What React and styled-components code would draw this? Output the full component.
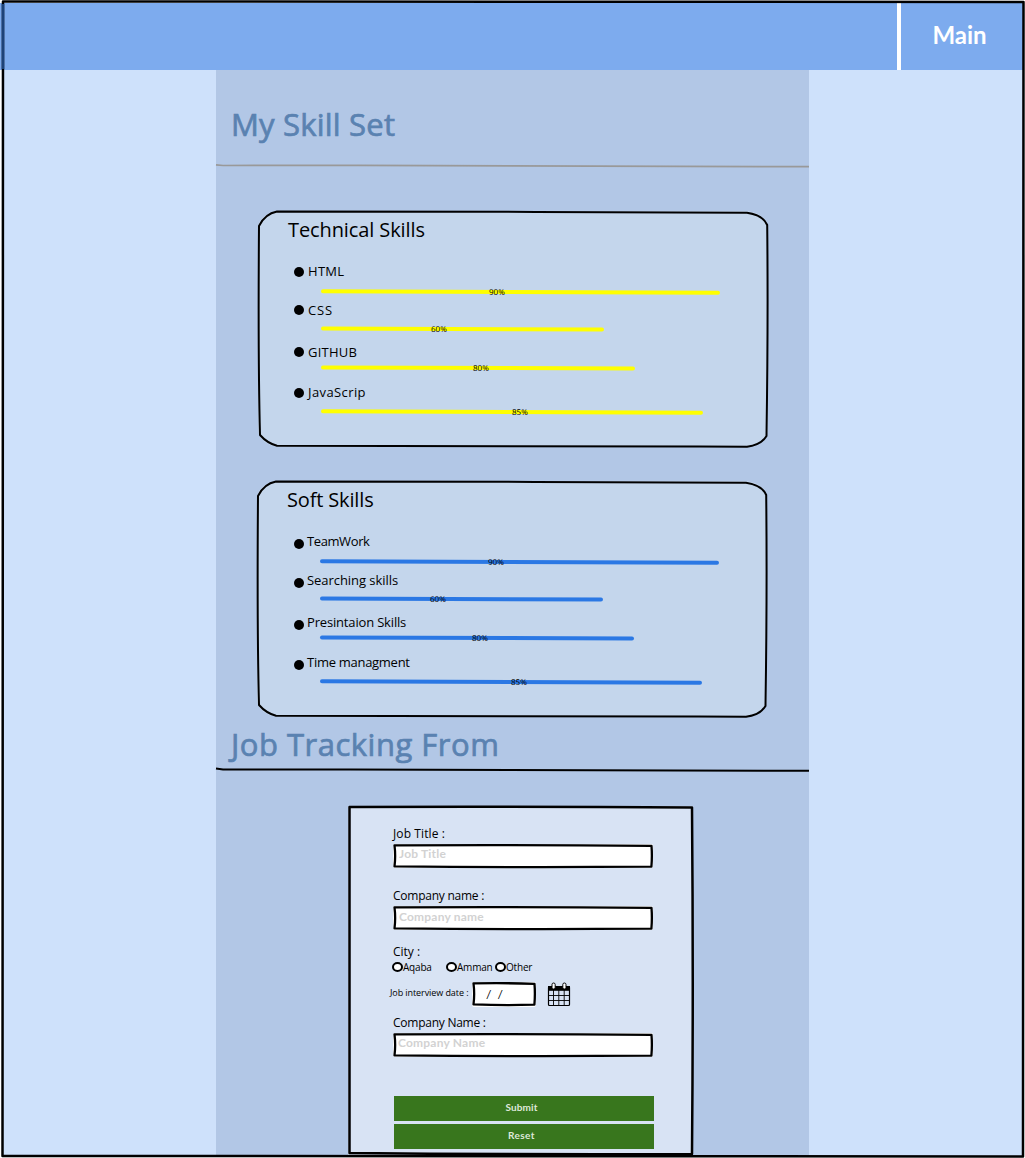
import React from 'react';
import styled, { createGlobalStyle } from 'styled-components';

const Global = createGlobalStyle`
  *, *::before, *::after { box-sizing: border-box; }
  body { margin: 0; background: #fff; }
  h1, h2, ul, p { margin: 0; padding: 0; font-weight: 400; }
  body { font-family: "Open Sans", "Noto Sans", sans-serif; }
  input, button { font-family: Lato, "Open Sans", sans-serif; }
`;

const Page = styled.div`
  position: relative;
  width: 1025px;
  height: 1158px;
  overflow: hidden;
  display: flex;
  flex-direction: column;
  padding: 3px 2px 1px 3px;
  background: #fff;
  color: #000;
`;

const Outline = styled.svg`
  position: absolute;
  left: 0;
  top: 0;
  overflow: visible;
  pointer-events: none;
  fill: none;
  stroke: #000;
  stroke-linejoin: round;
  stroke-linecap: round;
`;

const TopBar = styled.header`
  flex: none;
  height: 67px;
  margin: 0 -1px 0 -3px;
  display: flex;
  justify-content: flex-end;
  background: #7dabee;
`;

const NavLink = styled.a`
  width: 127px;
  border-left: 4px solid #fff;
  padding-right: 6px;
  text-align: center;
  color: #fff;
  font-family: Lato, sans-serif;
  font-size: 24px;
  font-weight: 700;
  letter-spacing: 0;
  line-height: 63px;
`;

const Body = styled.div`
  flex: 1;
  min-height: 0;
  display: flex;
  background: #cee1fb;
`;

const Column = styled.main`
  width: 593px;
  margin-left: 213px;
  display: flex;
  flex-direction: column;
  background: #b2c7e6;
`;

const Heading = styled.h1`
  flex: none;
  height: ${p => p.$height}px;
  padding: ${p => p.$top}px 0 0 ${p => p.$left}px;
  color: #5a82b1;
  font-size: 31px;
  line-height: 36px;
  letter-spacing: ${p => p.$spacing}px;
  -webkit-text-stroke: 0.7px #5a82b1;
  white-space: nowrap;
`;

const Rule = styled.svg`
  flex: none;
  display: block;
  width: 593px;
  height: 4px;
  overflow: visible;
  fill: none;
  stroke: ${p => p.$color};
  stroke-width: ${p => p.$weight};
`;

const Card = styled.section`
  position: relative;
  flex: none;
  width: 510px;
  height: 236px;
  margin: ${p => p.$top}px 0 0 ${p => p.$left}px;
  padding: 8px 0 0 30px;
  border-radius: 24px / 17px;
  background: #c4d6ec;
`;

const CardTitle = styled.h2`
  height: 43px;
  font-size: 20px;
  line-height: 22px;
  letter-spacing: ${p => p.$spacing}px;
`;

const Skills = styled.ul`
  list-style: none;
`;

const Skill = styled.li`
  height: ${p => p.$height}px;
`;

const SkillName = styled.div`
  height: ${p => p.$height}px;
  display: flex;
  align-items: flex-start;
  gap: ${p => p.$gap}px;
  padding-left: ${p => p.$indent}px;
  font-size: 13px;
  line-height: 18px;
  letter-spacing: ${p => p.$spacing}px;
`;

const Bullet = styled.span`
  width: 10px;
  height: 10px;
  margin-top: ${p => p.$drop}px;
  border-radius: 50%;
  background: #000;
`;

const Bar = styled.div`
  width: ${p => p.$width}px;
  height: 4px;
  margin-left: 33px;
  padding-left: ${p => p.$label}px;
  display: flex;
  align-items: center;
  border-radius: 2px;
  background: ${p => p.$color};
  transform: rotate(0.2deg);
  font-size: 8px;
  line-height: 10px;
`;

const Form = styled.form`
  position: relative;
  flex: none;
  width: 345px;
  height: 349px;
  margin: 34px 0 0 132px;
  padding: 20px 0 0 45px;
  background: #d8e3f4;
`;

const Label = styled.label`
  display: block;
  height: ${p => p.$height}px;
  font-size: 12px;
  line-height: 16px;
  letter-spacing: ${p => p.$spacing}px;
  white-space: nowrap;
`;

const Field = styled.div`
  position: relative;
  width: 260px;
  height: 24px;
  margin-bottom: ${p => p.$after}px;
`;

const Input = styled.input`
  display: block;
  width: 100%;
  height: 100%;
  border: 0;
  outline: 0;
  border-radius: 2px;
  padding: ${p => p.$pad || '0 0 5px 6px'};
  background: #fff;
  color: #000;
  font-size: 12px;
  &::placeholder {
    color: #d2d2d2;
    opacity: 1;
    font-weight: 700;
    letter-spacing: 0.2px;
  }
`;

const Options = styled.div`
  display: flex;
  height: 21px;
  margin-left: -1px;
`;

const Option = styled.label`
  width: ${p => p.$width}px;
  height: 14px;
  display: flex;
  align-items: center;
  font-size: 10px;
  letter-spacing: -0.2px;
`;

const Radio = styled.span`
  flex: none;
  width: 11px;
  height: 10px;
  border: 2px solid #000;
  border-radius: 50%;
  background: #fff;
`;

const DateRow = styled.div`
  display: flex;
  align-items: center;
  height: 26px;
  margin: 0 0 8px -3px;
`;

const DateLabel = styled.label`
  width: 82px;
  padding-bottom: 3px;
  font-size: 9px;
  letter-spacing: -0.08px;
  white-space: nowrap;
`;

const DateField = styled.div`
  position: relative;
  width: 64px;
  height: 25px;
  margin-right: 11px;
`;

const CalendarIcon = styled.svg`
  width: 24px;
  height: 25px;
`;

const Actions = styled.div`
  display: grid;
  gap: 3px;
  width: 260px;
  margin-left: 1px;
`;

const Button = styled.button`
  height: 25px;
  border: 0;
  padding: 0 5px 4px 0;
  background: #38761d;
  color: #dfe8da;
  font-size: 10px;
  font-weight: 700;
  letter-spacing: ${p => p.$spacing}px;
`;

function CardOutline() {
  return (
    <Outline width="510" height="236" viewBox="0 0 510 236" strokeWidth="2">
      <path d="M19 .6 C180 .2 330 1.2 489 1.7 Q505 4 509.2 14 C510 90 509.5 160 508.5 225 Q503 234 489 235.7 C330 235.2 170 235.7 19 234.8 Q9 232 2 224 C0 150 .5 80 1 15 Q7 3 19 .6Z" />
    </Outline>
  );
}

function InputOutline({ width = 260 }) {
  const w = width;
  return (
    <Outline width={w} height="24" viewBox={`0 0 ${w} 24`} strokeWidth="2.3">
      <path d={`M1.5 1.4 Q${w / 2} .8 ${w - 1.5} 1.8 Q${w - 0.7} 12 ${w - 1.6} 22.7 Q${w / 2} 23.6 1.5 22.4 Q2.8 12 1.5 1.4Z`} />
    </Outline>
  );
}

function Calendar() {
  return (
    <CalendarIcon viewBox="0 0 24 25" fill="none" stroke="#000">
      <rect x="1.5" y="4.5" width="21" height="19" rx="1" strokeWidth="1.2" />
      <path d="M1 4h22v4.8H1z" fill="#000" stroke="none" />
      <path d="M6.5 8v15M11.8 8v15M17.2 8v15M2 13.5h20M2 18.5h20" strokeWidth=".9" />
      <rect x="5" y="1" width="3.2" height="6" rx="1.6" fill="#fff" />
      <rect x="15.8" y="1" width="3.2" height="6" rx="1.6" fill="#fff" />
    </CalendarIcon>
  );
}

const technical = [
  { name: 'HTML', level: '90%', width: 399, label: 168, height: 39, bar: 28, spacing: 0.3, drop: 5 },
  { name: 'CSS', level: '60%', width: 283, label: 110, height: 42, bar: 26, spacing: 0.9, drop: 4 },
  { name: 'GITHUB', level: '80%', width: 314, label: 152, height: 40, bar: 23, spacing: 0.25, drop: 4 },
  { name: 'JavaScrip', level: '85%', width: 382, label: 191, height: 40, bar: 27, spacing: 0.4, drop: 5 },
];

const soft = [
  { name: 'TeamWork', level: '90%', width: 399, label: 168, height: 39, bar: 28, spacing: -0.4, drop: 7 },
  { name: 'Searching skills', level: '60%', width: 283, label: 110, height: 42, bar: 26, spacing: -0.05, drop: 7 },
  { name: 'Presintaion Skills', level: '80%', width: 314, label: 152, height: 40, bar: 23, spacing: -0.17, drop: 7 },
  { name: 'Time managment', level: '85%', width: 382, label: 191, height: 40, bar: 27, spacing: -0.28, drop: 7 },
];

function SkillCard({ title, spacing, skills, color, top, left, indent, gap }) {
  return (
    <Card $top={top} $left={left}>
      <CardTitle $spacing={spacing}>{title}</CardTitle>
      <Skills>
        {skills.map(s => (
          <Skill key={s.name} $height={s.height}>
            <SkillName $height={s.bar} $spacing={s.spacing} $indent={indent} $gap={gap}>
              <Bullet $drop={s.drop} />
              {s.name}
            </SkillName>
            <Bar $width={s.width} $label={s.label} $color={color}>{s.level}</Bar>
          </Skill>
        ))}
      </Skills>
      <CardOutline />
    </Card>
  );
}

export default function App() {
  return (
    <>
      <Global />
      <Page>
        <TopBar>
          <NavLink>Main</NavLink>
        </TopBar>
        <Body>
          <Column>
            <Heading $height={94} $top={36} $left={15} $spacing={0.2}>My Skill Set</Heading>
            <Rule $color="#999" $weight={1.7} viewBox="0 0 593 4">
              <path d="M0 .8 L7 1.5 Q300 1 593 2.7" />
            </Rule>
            <SkillCard title="Technical Skills" spacing={-0.1} skills={technical} color="#ffff00" top={43} left={42} indent={6} gap={4} />
            <SkillCard title="Soft Skills" spacing={-0.15} skills={soft} color="#2b78e4" top={34} left={41} indent={7} gap={3} />
            <Heading $height={51} $top={9} $left={15} $spacing={0.5}>Job Tracking From</Heading>
            <Rule $color="#000" $weight={2} viewBox="0 0 593 4">
              <path d="M0 .5 L7 1.5 Q300 1 593 2.8" />
            </Rule>
            <Form>
              <Label $height={18} $spacing={0.1}>Job Title :</Label>
              <Field $after={20}>
                <Input placeholder="Job Title" />
                <InputOutline />
              </Field>
              <Label $height={18} $spacing={-0.25}>Company name :</Label>
              <Field $after={14}>
                <Input placeholder="Company name" $pad="0 0 3px 6px" />
                <InputOutline />
              </Field>
              <Label as="div" $height={16} $spacing={0}>City :</Label>
              <Options>
                <Option $width={54}><Radio />Aqaba</Option>
                <Option $width={49}><Radio />Amman</Option>
                <Option $width={50}><Radio />Other</Option>
              </Options>
              <DateRow>
                <DateLabel>Job interview date :</DateLabel>
                <DateField>
                  <Input defaultValue="/  /" $pad="0 0 0 14px" />
                  <InputOutline width={64} />
                </DateField>
                <Calendar />
              </DateRow>
              <Label $height={18} $spacing={-0.25}>Company Name :</Label>
              <Field $after={39}>
                <Input placeholder="Company Name" $pad="0 0 5px 5px" />
                <InputOutline />
              </Field>
              <Actions>
                <Button type="button" $spacing={0.1}>Submit</Button>
                <Button type="button" $spacing={0.4}>Reset</Button>
              </Actions>
              <Outline width="345" height="349" viewBox="0 0 345 349" strokeWidth="2.5">
                <path d="M1.5 1 Q170 .4 344 1.5 Q345.5 180 344 348 Q170 348.6 1.5 347 Q.8 170 1.5 1Z" />
              </Outline>
            </Form>
          </Column>
        </Body>
        <Outline width="1025" height="1158" viewBox="0 0 1025 1158" strokeWidth="2.5">
          <path d="M3 1.5 Q500 1 1023.5 2 Q1024 580 1023 1156.5 Q500 1157 2.5 1156 Q2 580 3 1.5Z" />
          <path d="M3 4V69" stroke="#1d4379" strokeLinecap="butt" />
        </Outline>
      </Page>
    </>
  );
}
